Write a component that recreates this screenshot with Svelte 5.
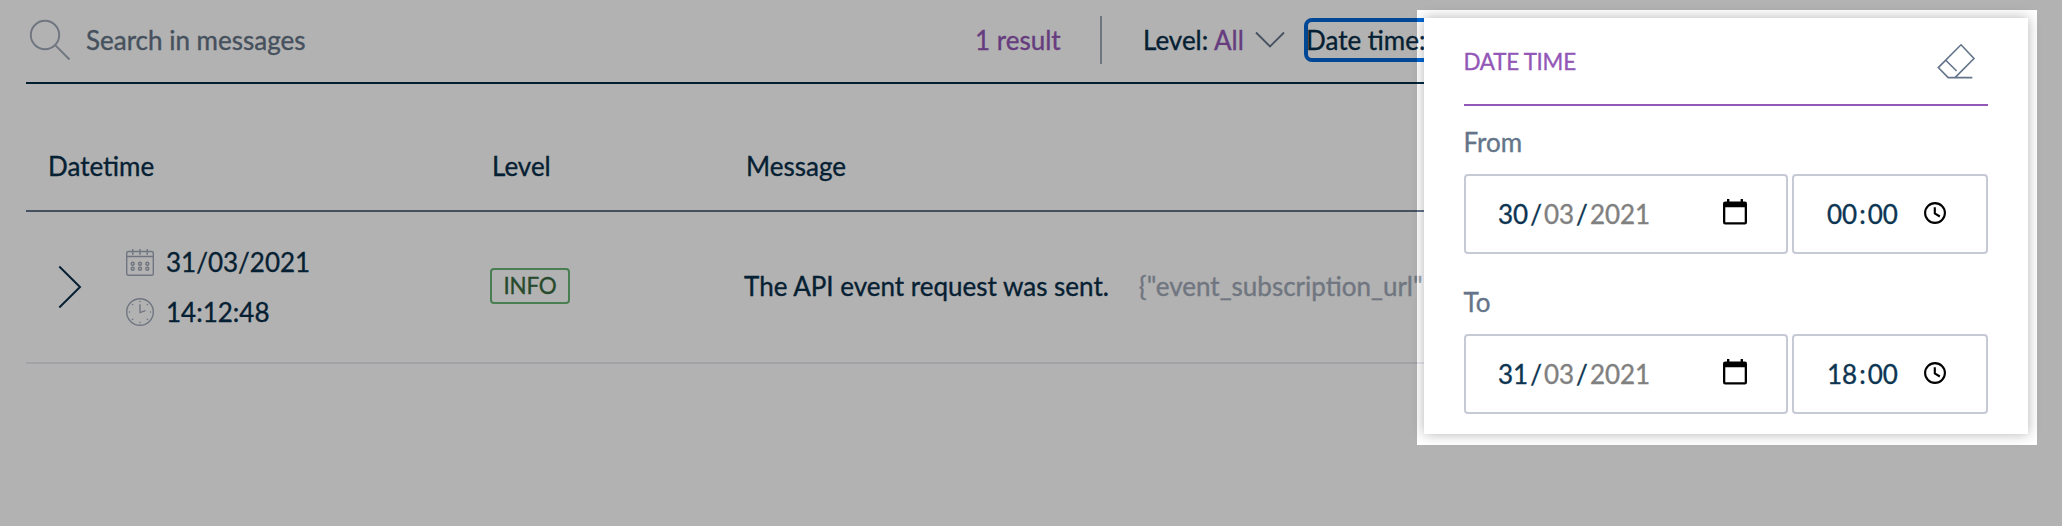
<script>
  const ranges = [
    { label: 'From', day: '30', month: '03', year: '2021', hour: '00', minute: '00' },
    { label: 'To', day: '31', month: '03', year: '2021', hour: '18', minute: '00' }
  ];
  const dots = [6.7, 14, 21.3].flatMap((x) => [15.7, 20.8].map((y) => [x, y]));
  const ticks = Array.from({ length: 8 }, (_, i) => (i * Math.PI) / 4)
    .map((a) => [14 + 10.5 * Math.cos(a), 14 + 10.5 * Math.sin(a)]);
</script>

<div class="page">
  <header class="toolbar">
    <svg class="search" width="42" height="42" viewBox="0 0 42 42">
      <circle cx="16" cy="16" r="14.2" /><path d="M26.2 26.2 40.5 40.5" />
    </svg>
    <span class="placeholder">Search in messages</span>
    <span class="count">1 result</span>
    <span class="divider"></span>
    <span class="level">Level: <em>All</em></span>
    <svg class="down" width="30" height="18" viewBox="0 0 30 18"><path d="M1 1.5 15 15.5 29 1.5" /></svg>
    <button class="focused">Date time:</button>
  </header>

  <div class="grid head">
    <span>Datetime</span><span>Level</span><span>Message</span>
  </div>

  <div class="grid row">
    <div class="when">
      <svg class="right" width="24" height="44" viewBox="0 0 24 44"><path d="M1.3 1.5 22 22 1.3 42.5" /></svg>
      <div class="stamps">
        <div class="stamp">
          <svg width="28" height="28" viewBox="0 0 28 28">
            <rect x=".7" y="3.5" width="26.6" height="23.8" rx="1.5" />
            <path d="M1 8.5h26M6.8 1v6M14 1v6M21.2 1v6" />
            {#each dots as [x, y]}<circle cx={x} cy={y} r="1.5" />{/each}
          </svg>
          <span>31/03/2021</span>
        </div>
        <div class="stamp">
          <svg width="28" height="28" viewBox="0 0 28 28">
            <circle cx="14" cy="14" r="13.3" /><path d="M14 6.3V14.6L19.5 12.6" />
            {#each ticks as [x, y]}<circle class="tick" cx={x} cy={y} r=".8" />{/each}
          </svg>
          <span>14:12:48</span>
        </div>
      </div>
    </div>
    <div><span class="badge">INFO</span></div>
    <div class="message"><span>The API event request was sent.</span><span class="detail">{'{"event_subscription_url"'}</span></div>
  </div>

  <section class="panel">
    <div class="title">
      <h2>DATE TIME</h2>
      <svg width="38" height="36" viewBox="0 0 38 36">
        <path d="M24 1.8 37 15.5 18 34.6H11.2L1.3 24.6ZM8.8 17.3 19.6 28M11 34.6H35.3" />
      </svg>
    </div>
    {#each ranges as r}
      <div class="range">
        <span class="label">{r.label}</span>
        <div class="fields">
          <div class="field date">
            <span class="part">{r.day}</span>/<span class="part muted">{r.month}</span>/<span class="part muted">{r.year}</span>
            <svg class="cal" width="24" height="26" viewBox="0 0 24 26">
              <path d="M4 0h2.4v2.4h11.2V0H20v2.4h1.5A2.3 2.3 0 0 1 24 4.8v18.4a2.3 2.3 0 0 1-2.4 2.4H2.4A2.3 2.3 0 0 1 0 23.2V4.8a2.3 2.3 0 0 1 2.4-2.4H4ZM2.3 8.3v15h19.4v-15Z" fill-rule="evenodd" />
            </svg>
          </div>
          <div class="field time">
            <span class="part">{r.hour}</span>:<span class="part">{r.minute}</span>
            <svg class="clock" width="22" height="22" viewBox="0 0 22 22">
              <circle cx="11" cy="11" r="9.9" /><path d="M10.8 5.2v6.3l5 3" />
            </svg>
          </div>
        </div>
      </div>
    {/each}
  </section>

  <div class="spotlight"></div>
</div>

<style>
  :global(body) { margin: 0; }
  .page {
    position: relative;
    box-sizing: border-box;
    height: 526px;
    padding: 0 36px 0 26px;
    overflow: hidden;
    background: #fff;
    color: #0a2f4a;
    font: 26px/32px Lato, "Open Sans", sans-serif;
    -webkit-text-stroke: .35px;
  }
  svg { display: block; flex: none; fill: none; stroke-width: 1.6; overflow: visible; }
  .toolbar {
    display: flex;
    align-items: center;
    height: 80px;
    padding: 0 0 2px 3px;
    border-bottom: 2px solid #002b45;
    white-space: nowrap;
  }
  .search { stroke: #a1a9b8; stroke-width: 1.9; }
  .placeholder { width: 889px; margin-left: 15px; color: #657487; }
  .count { width: 125px; color: #9357b7; }
  .divider { width: 2px; height: 48px; background: #a0a8b6; }
  .level { width: 112px; margin-left: 41px; }
  .level em { font-style: normal; color: #9357b7; }
  .down { stroke: #64758a; stroke-width: 1.8; margin-right: 19px; }
  .focused {
    flex: none;
    width: 400px;
    height: 44px;
    padding: 0;
    border: 4px solid #0067d6;
    border-radius: 8px;
    background: none;
    color: inherit;
    font: inherit;
    text-align: left;
    text-indent: -2px;
  }
  .grid { display: grid; }
  .head { grid-template-columns: 444px 254px 1fr; padding: 66px 0 28px 22px; border-bottom: 2px solid #64758a; }
  .row { grid-template-columns: 464px 254px 1fr; align-items: center; height: 150px; border-bottom: 2px solid #e8e8ef; }
  .when { display: flex; align-items: center; padding-left: 32px; }
  .right { stroke: #0a2f4a; stroke-width: 2; }
  .stamps { display: grid; gap: 18px; margin-left: 44px; }
  .stamp { display: flex; align-items: center; gap: 12px; }
  .stamp svg { stroke: #a1a9b8; stroke-width: 1.4; }
  .stamp .tick { fill: #a1a9b8; stroke: none; }
  .badge {
    display: block;
    box-sizing: border-box;
    width: 80px;
    height: 36px;
    margin-bottom: 2px;
    border: 2px solid #67b576;
    border-radius: 4px;
    color: #386b40;
    font-size: 22.4px;
    letter-spacing: -.2px;
    text-align: center;
  }
  .message { display: flex; gap: 30px; margin-bottom: 2px; white-space: nowrap; }
  .detail { color: #a1a9b8; }
  .panel {
    position: absolute;
    left: 1424px;
    top: 18px;
    box-sizing: border-box;
    width: 604px;
    height: 416px;
    padding: 0 40px;
    background: #fff;
    box-shadow: 0 0 12px rgba(0, 0, 0, .3);
  }
  .title {
    display: flex;
    align-items: center;
    justify-content: space-between;
    box-sizing: border-box;
    height: 88px;
    padding: 0 13px 0 0;
    border-bottom: 2px solid #9357b7;
  }
  h2 { margin: 0; padding-top: 2px; text-indent: -.5px; font-size: 22.4px; letter-spacing: -.25px; font-weight: 400; color: #9357b7; }
  .title svg { stroke: #64758a; }
  .range { height: 160px; }
  .label { display: block; padding: 20px 0 16px; text-indent: -.5px; color: #64758a; }
  .fields { display: flex; gap: 4px; }
  .field {
    display: flex;
    align-items: center;
    box-sizing: border-box;
    height: 80px;
    border: 2px solid #c6cad5;
    border-radius: 4px;
    color: #0d3552;
  }
  .date { width: 324px; padding: 0 39px 0 30px; }
  .time { width: 196px; padding: 0 40px 0 31px; }
  .part { padding: 0 2px; }
  .muted { color: #808080; }
  .field svg { margin-left: auto; }
  .cal { fill: #000; margin-bottom: 4px; }
  .clock { stroke: #000; stroke-width: 2.1; margin-bottom: 2px; }
  .spotlight {
    position: absolute;
    left: 1417px;
    top: 10px;
    width: 620px;
    height: 435px;
    box-shadow: 0 0 0 2100px rgba(0, 0, 0, .3);
    pointer-events: none;
  }
</style>
